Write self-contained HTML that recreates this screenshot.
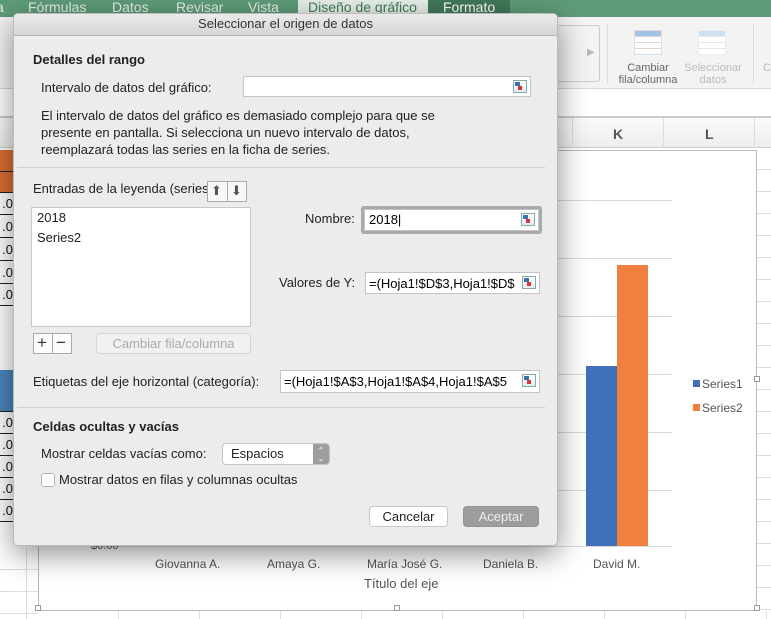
<!DOCTYPE html>
<html><head><meta charset="utf-8">
<style>
*{margin:0;padding:0;box-sizing:border-box}
body{width:771px;height:619px;position:relative;overflow:hidden;background:#fff;font-family:"Liberation Sans",Arial,sans-serif;font-size:13px;color:#222}
.a{position:absolute}
.t{position:absolute;white-space:nowrap;line-height:16px}
.tab{position:absolute;white-space:nowrap;line-height:14px;font-size:14px;top:0}
.inp{position:absolute;background:#fff;border:1px solid #c4c4c4}
.rb{position:absolute;right:3px;top:3px;width:14px;height:13px;border:1px solid #8aa;background:linear-gradient(#fff,#e4ecf4)}
.rb:before{content:"";position:absolute;left:1px;top:1px;width:5px;height:4px;background:#3a6fb0}
.rb:after{content:"";position:absolute;left:4px;top:5px;width:4px;height:4px;background:#d33}
.btn{position:absolute;background:#fff;border:1px solid #c8c8c8;border-radius:4px;text-align:center;line-height:19px}
.gl{position:absolute;left:90px;width:582px;height:1px;background:#d9d9d9}
.cell{position:absolute;left:0;width:14px;height:22px;border-bottom:1px solid #222;border-right:1px solid #222;font-size:13px;line-height:22px;text-align:right;color:#111}
</style></head><body>
<!-- tab bar -->
<div class="a" style="left:0;top:0;width:771px;height:17px;background:#5e9c79"></div>
<div class="a" style="left:298px;top:0;width:130px;height:17px;background:#e8efea"></div>
<div class="a" style="left:428px;top:0;width:82px;height:17px;background:#41795a"></div>
<div class="tab" style="left:-4px;color:#e8f0ea">a</div>
<div class="tab" style="left:28px;color:#e8f0ea">Fórmulas</div>
<div class="tab" style="left:112px;color:#e8f0ea">Datos</div>
<div class="tab" style="left:176px;color:#e8f0ea">Revisar</div>
<div class="tab" style="left:248px;color:#e8f0ea">Vista</div>
<div class="tab" style="left:308px;color:#3f7d5a">Diseño de gráfico</div>
<div class="tab" style="left:443px;color:#fff">Formato</div>
<!-- ribbon -->
<div class="a" style="left:0;top:17px;width:771px;height:72px;background:#f3f3f3;border-bottom:1px solid #d6d6d6"></div>
<div class="a" style="left:540px;top:25px;width:60px;height:57px;border:1px solid #ccc;border-left:none;border-radius:0 3px 3px 0"></div>
<div class="t" style="left:587px;top:45px;color:#bbb;font-size:10px">▶</div>
<div class="a" style="left:607px;top:24px;width:1px;height:60px;background:#ddd"></div>
<div class="a" style="left:753px;top:24px;width:1px;height:60px;background:#ddd"></div>
<div class="a" style="left:634px;top:30px;width:28px;height:25px;border:1px solid #ddd;background:repeating-linear-gradient(#fff 0 5px,#e5d5c8 5px 6px)"><div style="height:5px;background:#9ec3e6"></div></div>
<div class="a" style="left:698px;top:30px;width:28px;height:25px;border:1px solid #eee;background:repeating-linear-gradient(#fff 0 5px,#f0e4da 5px 6px)"><div style="height:5px;background:#cfe0f0"></div></div>
<div class="t" style="left:617px;top:62px;font-size:11px;line-height:12px;color:#666;text-align:center;width:62px">Cambiar<br>fila/columna</div>
<div class="t" style="left:682px;top:62px;font-size:11px;line-height:12px;color:#bbb;text-align:center;width:62px">Seleccionar<br>datos</div>
<div class="t" style="left:763px;top:62px;font-size:11px;line-height:12px;color:#bbb">C</div>
<!-- formula area / col headers -->
<div class="a" style="left:0;top:116px;width:771px;height:2px;background:#ccc"></div>
<div class="a" style="left:0;top:118px;width:771px;height:30px;background:linear-gradient(#fafafa,#eee);border-bottom:1px solid #ccc"></div>
<div class="a" style="left:572px;top:118px;width:1px;height:30px;background:#ddd"></div>
<div class="a" style="left:663px;top:118px;width:1px;height:30px;background:#ddd"></div>
<div class="a" style="left:754px;top:118px;width:1px;height:30px;background:#ddd"></div>
<div class="t" style="left:613px;top:126px;font-weight:bold;color:#555;font-size:14px">K</div>
<div class="t" style="left:705px;top:126px;font-weight:bold;color:#555;font-size:14px">L</div>
<!-- right grid -->
<div class="a" style="left:757px;top:148px;width:14px;height:471px;background:repeating-linear-gradient(#fff 0 21px,#ddd 21px 22px)"></div>
<!-- left cells -->
<div class="a" style="left:0;top:150px;width:14px;height:43px;background:#d96f32;border-bottom:1px solid #222"></div>
<div class="a" style="left:0;top:171px;width:14px;height:1px;background:#222"></div>
<div class="cell" style="top:193px">.0</div><div class="cell" style="top:216px">.0</div><div class="cell" style="top:239px">.0</div><div class="cell" style="top:262px">.0</div><div class="cell" style="top:284px">.0</div>
<div class="a" style="left:0;top:370px;width:14px;height:42px;background:#4a86bf;border-bottom:1px solid #222"></div>
<div class="cell" style="top:412px">.0</div><div class="cell" style="top:434px">.0</div><div class="cell" style="top:456px">.0</div><div class="cell" style="top:478px">.0</div><div class="cell" style="top:500px">.0</div>
<div class="a" style="left:0;top:548px;width:38px;height:71px;background:repeating-linear-gradient(#fff 0 21px,#ddd 21px 22px)"></div>
<div class="a" style="left:26px;top:548px;width:1px;height:71px;background:#ddd"></div>
<!-- chart -->
<div class="a" style="left:38px;top:150px;width:719px;height:461px;border:1px solid #bbb;background:#fff"></div>
<div class="a" style="left:38px;top:611px;width:733px;height:8px;background:repeating-linear-gradient(90deg,#fff 0 80px,#ddd 80px 81px)"></div>
<div class="gl" style="top:200px"></div><div class="gl" style="top:258px"></div><div class="gl" style="top:316px"></div><div class="gl" style="top:374px"></div><div class="gl" style="top:432px"></div><div class="gl" style="top:490px"></div><div class="gl" style="top:546px"></div>
<div class="a" style="left:586px;top:366px;width:31px;height:180px;background:#4070bb"></div>
<div class="a" style="left:617px;top:265px;width:31px;height:281px;background:#f07f40"></div>
<div class="a" style="left:693px;top:380px;width:7px;height:7px;background:#4070bb"></div>
<div class="t" style="left:702px;top:376px;font-size:12px;color:#555">Series1</div>
<div class="a" style="left:693px;top:404px;width:7px;height:7px;background:#f07f40"></div>
<div class="t" style="left:702px;top:400px;font-size:12px;color:#555">Series2</div>
<div class="t" style="left:91px;top:538px;font-size:11px;color:#555">$0.00</div>
<div class="t" style="left:155px;top:556px;font-size:12px;color:#555">Giovanna A.</div>
<div class="t" style="left:267px;top:556px;font-size:12px;color:#555">Amaya G.</div>
<div class="t" style="left:367px;top:556px;font-size:12px;color:#555">María José G.</div>
<div class="t" style="left:483px;top:556px;font-size:12px;color:#555">Daniela B.</div>
<div class="t" style="left:593px;top:556px;font-size:12px;color:#555">David M.</div>
<div class="t" style="left:364px;top:576px;font-size:13px;color:#555">Título del eje</div>
<div class="a" style="left:35px;top:605px;width:6px;height:6px;border:1px solid #999;background:#fff"></div>
<div class="a" style="left:394px;top:605px;width:6px;height:6px;border:1px solid #999;background:#fff"></div>
<div class="a" style="left:754px;top:605px;width:6px;height:6px;border:1px solid #999;background:#fff"></div>
<div class="a" style="left:754px;top:376px;width:6px;height:6px;border:1px solid #999;background:#fff"></div>
<!-- dialog -->
<div class="a" style="left:13px;top:13px;width:545px;height:533px;background:#ececec;border-radius:5px;box-shadow:0 8px 30px rgba(0,0,0,.45);border:1px solid #bbb;overflow:hidden">
 <div class="a" style="left:0;top:0;width:545px;height:22px;background:linear-gradient(#ebebeb,#d6d6d6);border-bottom:1px solid #b5b5b5"></div>
</div>
<div class="t" style="left:13px;top:16px;width:545px;text-align:center;color:#333">Seleccionar el origen de datos</div>
<div class="t" style="left:33px;top:52px;font-weight:bold">Detalles del rango</div>
<div class="t" style="left:41px;top:80px">Intervalo de datos del gráfico:</div>
<div class="inp" style="left:243px;top:76px;width:288px;height:21px"><div class="rb"></div></div>
<div class="t" style="left:41px;top:107px;line-height:17px">El intervalo de datos del gráfico es demasiado complejo para que se<br>presente en pantalla. Si selecciona un nuevo intervalo de datos,<br>reemplazará todas las series en la ficha de series.</div>
<div class="a" style="left:17px;top:167px;width:528px;height:1px;background:#d0d0d0"></div>
<div class="t" style="left:33px;top:181px;width:174px;overflow:hidden">Entradas de la leyenda (series)</div>
<div class="a" style="left:207px;top:181px;width:40px;height:21px;border:1px solid #aaa;background:#f8f8f8"><div class="a" style="left:19px;top:0;width:1px;height:19px;background:#aaa"></div><span class="t" style="left:3px;top:1px;font-size:13px;color:#555">⬆</span><span class="t" style="left:23px;top:1px;font-size:13px;color:#555">⬇</span></div>
<div class="inp" style="left:31px;top:207px;width:220px;height:120px;border-color:#c8c8c8"></div>
<div class="t" style="left:37px;top:210px">2018</div>
<div class="t" style="left:37px;top:230px">Series2</div>
<div class="t" style="left:305px;top:211px">Nombre:</div>
<div class="a" style="left:361px;top:206px;width:181px;height:28px;border:3px solid #a9a9a9;border-radius:3px"></div>
<div class="inp" style="left:364px;top:209px;width:175px;height:22px"><div class="rb"></div><span class="t" style="left:4px;top:2px;color:#000">2018|</span></div>
<div class="t" style="left:279px;top:275px">Valores de Y:</div>
<div class="inp" style="left:365px;top:272px;width:175px;height:22px;overflow:hidden"><span class="t" style="left:3px;top:3px;color:#000">=(Hoja1!$D$3,Hoja1!$D$</span><div class="a" style="left:150px;top:0;width:24px;height:20px;background:#fff"></div><div class="rb"></div></div>
<div class="a" style="left:33px;top:333px;width:39px;height:21px;border:1px solid #aaa;background:#fbfbfb"><div class="a" style="left:18px;top:0;width:1px;height:19px;background:#aaa"></div><span class="t" style="left:3px;top:1px;font-size:17px;color:#333">+</span><span class="t" style="left:22px;top:1px;font-size:17px;color:#333">−</span></div>
<div class="btn" style="left:96px;top:333px;width:155px;height:21px;color:#aaa;background:#f1f1f1;border-color:#d5d5d5">Cambiar fila/columna</div>
<div class="t" style="left:33px;top:374px">Etiquetas del eje horizontal (categoría):</div>
<div class="inp" style="left:280px;top:370px;width:260px;height:23px;overflow:hidden"><span class="t" style="left:3px;top:3px;color:#000">=(Hoja1!$A$3,Hoja1!$A$4,Hoja1!$A$5</span><div class="a" style="left:233px;top:0;width:26px;height:21px;background:#fff"></div><div class="rb"></div></div>
<div class="a" style="left:17px;top:407px;width:528px;height:1px;background:#d0d0d0"></div>
<div class="t" style="left:33px;top:419px;font-weight:bold">Celdas ocultas y vacías</div>
<div class="t" style="left:41px;top:446px">Mostrar celdas vacías como:</div>
<div class="btn" style="left:222px;top:443px;width:108px;height:22px;text-align:left;padding-left:8px;line-height:20px;border-color:#c4c4c4;overflow:hidden">Espacios<div class="a" style="right:0;top:0;width:16px;height:22px;background:#9e9e9e;color:#fff;font-size:8px;line-height:8px;text-align:center;padding-top:3px">⌃<br>⌄</div></div>
<div class="a" style="left:41px;top:473px;width:14px;height:14px;border:1px solid #b5b5b5;border-radius:3px;background:#fff"></div>
<div class="t" style="left:59px;top:472px">Mostrar datos en filas y columnas ocultas</div>
<div class="btn" style="left:369px;top:506px;width:79px;height:21px">Cancelar</div>
<div class="btn" style="left:463px;top:506px;width:76px;height:21px;background:#9d9d9f;border-color:#929294;color:#eee">Aceptar</div>
</body></html>
